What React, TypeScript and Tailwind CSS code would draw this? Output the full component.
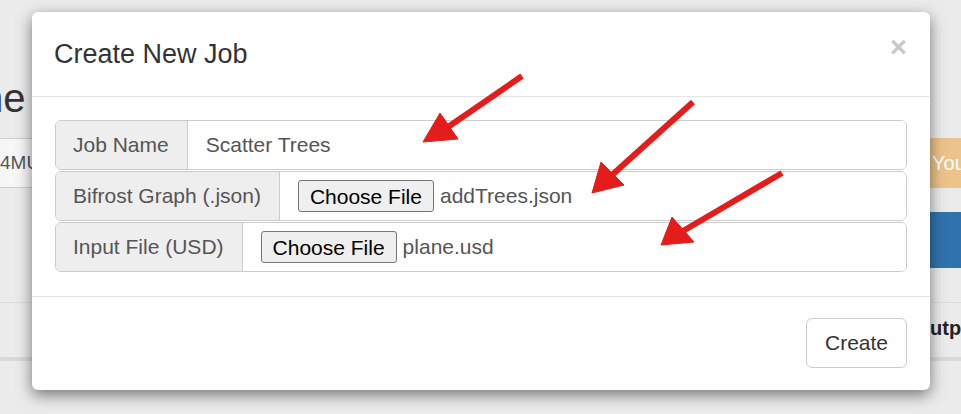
import React from 'react';

const fields = [
  { label: 'Job Name', kind: 'text', value: 'Scatter Trees' },
  { label: 'Bifrost Graph (.json)', kind: 'file', value: 'addTrees.json' },
  { label: 'Input File (USD)', kind: 'file', value: 'plane.usd' },
];

const arrows = [
  { tail: [522, 76], base: [448, 127], head: '423,142 440,113 458,139' },
  { tail: [693, 102], base: [612, 175], head: '592,193 601,162 624,185' },
  { tail: [782, 173], base: [683, 231], head: '661,245 672,217 694,242' },
];

function FieldRow({ label, kind, value }: { label: string; kind: string; value: string }) {
  return (
    <div className="flex h-[50px] rounded-[6px] border border-[#ccc] overflow-hidden">
      <div className="flex items-center bg-[#eee] border-r border-[#ccc] pl-[17px] pr-[18px] text-[21px] text-[#555] whitespace-nowrap">
        {label}
      </div>
      <div className="flex flex-1 items-center bg-white pl-[18px] text-[21px] text-[#555]">
        {kind === 'file' ? (
          <>
            <button className="h-[32px] px-[11px] rounded-[3px] border border-[#767676] bg-[#efefef] text-[21px] leading-none text-black">
              Choose File
            </button>
            <span className="ml-[6px]">{value}</span>
          </>
        ) : (
          <span>{value}</span>
        )}
      </div>
    </div>
  );
}

export default function App() {
  return (
    <div className="relative w-[961px] h-[414px] overflow-hidden bg-[#ebebeb] font-['Liberation_Sans',Arial,sans-serif]">
      {/* page behind the backdrop */}
      <div className="h-[138px] pt-[74px]">
        <div className="-ml-[19px] text-[40px] leading-[48px] text-[#333]">ne</div>
      </div>
      <div className="flex h-[50px] justify-between">
        <div className="flex w-[200px] items-center border-y border-[#ccc] bg-[#f6f6f6] text-[19px] text-[#555]">4MU</div>
        <div className="flex w-[31px] items-center overflow-hidden bg-[#ecc38b] pl-[2px] text-[20px] text-white whitespace-nowrap">You</div>
      </div>
      <div className="flex h-[80px] items-end justify-end">
        <div className="h-[56px] w-[31px] bg-[#2f73ae]" />
      </div>
      <div className="h-[35px] border-b border-[#dcdcdc]" />
      <div className="flex h-[54px] items-center justify-end">
        <div className="w-[31px] pb-[4px] text-[20px] font-bold text-[#222] whitespace-nowrap">utp</div>
      </div>
      <div className="h-[4px] bg-[#d9d9d9]" />

      {/* modal */}
      <div className="absolute left-[32px] top-[12px] w-[898px] rounded-[6px] bg-white shadow-[0_5px_15px_rgba(0,0,0,0.5)] text-[#333]">
        <div className="flex h-[85px] items-center justify-between border-b border-[#e5e5e5] pl-[22px] pr-[23px]">
          <h4 className="text-[27px]">Create New Job</h4>
          <span className="-mt-[14px] text-[29px] font-bold leading-none text-[#c8c8c8]">×</span>
        </div>
        <div className="flex flex-col gap-px pl-[23px] pr-[23px] pt-[23px] pb-[24px]">
          {fields.map((f) => (
            <FieldRow key={f.label} {...f} />
          ))}
        </div>
        <div className="flex justify-end border-t border-[#e5e5e5] pl-[22px] pr-[23px] pt-[21px] pb-[22px]">
          <button className="h-[50px] w-[101px] rounded-[6px] border border-[#ccc] bg-white text-[21px] text-[#333]">
            Create
          </button>
        </div>
      </div>

      {/* annotation arrows */}
      <svg className="absolute left-0 top-0 pointer-events-none" width="961" height="414" viewBox="0 0 961 414">
        {arrows.map((a, i) => (
          <g key={i} fill="#e41c1c" stroke="#e41c1c">
            <line x1={a.tail[0]} y1={a.tail[1]} x2={a.base[0]} y2={a.base[1]} strokeWidth="6" />
            <polygon points={a.head} strokeWidth="1" strokeLinejoin="round" />
          </g>
        ))}
      </svg>
    </div>
  );
}
